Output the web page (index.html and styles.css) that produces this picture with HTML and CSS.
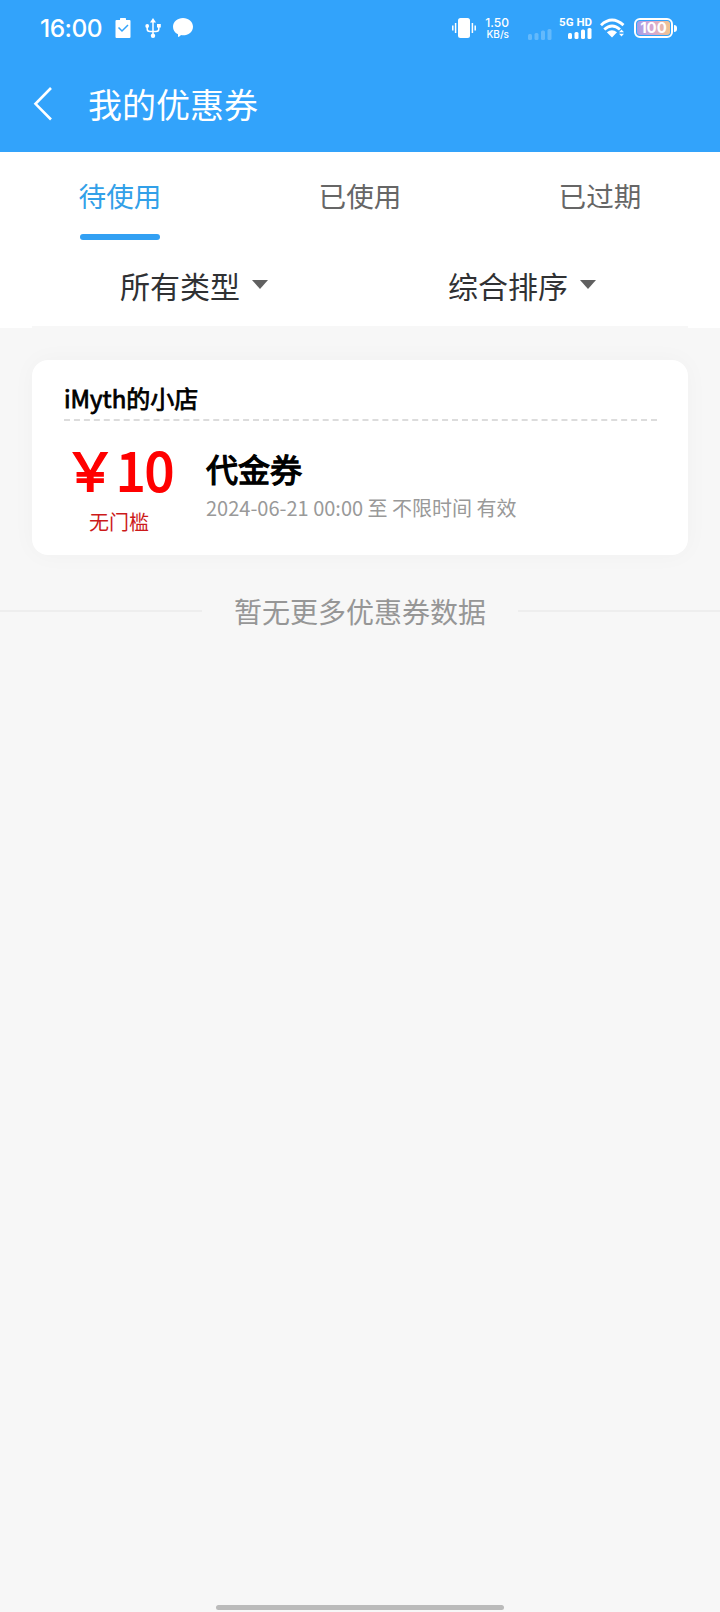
FILE: index.html
```
<!DOCTYPE html>
<html lang="zh-CN">
<head>
<meta charset="utf-8">
<title>我的优惠券</title>
<link rel="stylesheet" href="styles.css">
</head>
<body>
<header class="header">
  <div class="status">
    <div class="status-left">
      <span class="clock">16:00</span>
      <svg class="icon-task" width="16" height="20" viewBox="0 0 16 20"><path d="M1.500 2H5V.7Q5 0 5.700 0H10.300Q11 0 11 .7V2H14.500Q15.500 2 15.500 3V19Q15.500 20 14.500 20H1.500Q.5 20 .5 19V3Q.5 2 1.500 2Z" fill="#fff"/><path d="M3.500 9.500 7 13 13 7" fill="none" stroke="#32a3fb" stroke-width="1.500"/></svg>
      <svg class="icon-usb" width="16" height="20" viewBox="0 0 16 20" fill="none" stroke="#fff" stroke-width="1.500"><path d="M8 3V17M2.200 9V11Q2.200 13.500 5 13.500H11Q13.800 13.500 13.800 11V9"/><path d="M8 0 11 4.500H5Z" fill="#fff" stroke="none"/><circle cx="8" cy="17.700" r="2.200" fill="#fff" stroke="none"/><circle cx="2.200" cy="8" r="1.900" fill="#fff" stroke="none"/><path d="M12 6H15.800V9.500H12Z" fill="#fff" stroke="none"/></svg>
      <svg class="icon-chat" width="20" height="20" viewBox="0 0 20 20"><path d="M10 0C15.500 0 20 3.700 20 8.700S15.500 17.300 10 17.300Q8.900 17.300 8 17.100Q7 18.500 5 19V16.200Q0 13.800 0 8.700C0 3.700 4.500 0 10 0Z" fill="#fff"/></svg>
    </div>
    <div class="status-right">
      <svg class="icon-vibrate" width="24" height="20" viewBox="0 0 24 20"><rect x="6" width="12" height="20" rx="2.500" fill="#fff"/><path d="M.8 7.500V12.500M3.600 5V15M20.400 5V15M23.200 7.500V12.500" stroke="#fff" stroke-width="1.500"/></svg>
      <div class="speed"><span class="speed-value">1.50</span><span class="speed-unit">KB/s</span></div>
      <svg class="icon-nosim" width="24" height="12" viewBox="0 0 24 12" fill="#fff" opacity=".24"><rect y="6" width="4" height="6" rx="1.500"/><rect x="6.500" y="5" width="4" height="7" rx="1.500"/><rect x="13" y="2.500" width="4" height="9.500" rx="1.500"/><rect x="19.500" y="1" width="4" height="11" rx="1.500"/></svg>
      <div class="network">
        <span class="network-label">5G HD</span>
        <svg width="24" height="11" viewBox="0 0 24 11" fill="#fff"><rect y="5" width="4" height="6" rx="1.500"/><rect x="6.500" y="4" width="4" height="7" rx="1.500"/><rect x="13" y="1.500" width="4" height="9.500" rx="1.500"/><rect x="19.500" width="4" height="11" rx="1.500"/></svg>
      </div>
      <svg class="icon-wifi" width="26" height="20" viewBox="0 0 26 20" fill="none" stroke="#fff" stroke-width="2.900"><path d="M1 7.200Q12 -3 23.500 7.200M4.300 11.500Q12 4.500 20 11.500"/><path d="M6.800 14.300Q12 10 17 14.300L12 19.500Z" fill="#fff" stroke="none"/><path d="M19 14.200 21.500 11.500 24 14.200ZM19 15.800 21.500 18.500 24 15.800Z" fill="#fff" stroke="none"/></svg>
      <div class="battery"><span class="battery-level">100</span></div>
      <span class="battery-tip"></span>
    </div>
  </div>
  <div class="navbar">
    <svg width="20" height="34" viewBox="0 0 20 34"><path d="M18 1 2.500 16.800 18 32.500" fill="none" stroke="#fff" stroke-width="2.600"/></svg>
    <h1 class="title">我的优惠券</h1>
  </div>
</header>
<nav class="tabs">
  <div class="tab tab-active">待使用</div>
  <div class="tab">已使用</div>
  <div class="tab">已过期</div>
</nav>
<div class="filter-wrap">
  <div class="filters">
    <div class="filter">所有类型<span class="caret"></span></div>
    <div class="filter">综合排序<span class="caret"></span></div>
  </div>
</div>
<main class="list">
  <article class="card">
    <h2 class="shop">iMyth的小店</h2>
    <div class="coupon">
      <div class="price">
        <div class="amount">￥10</div>
        <div class="limit">无门槛</div>
      </div>
      <div class="info">
        <div class="name">代金券</div>
        <div class="date">2024-06-21 00:00 至 不限时间 有效</div>
      </div>
    </div>
  </article>
  <div class="end"><span class="rule"></span><span class="end-text">暂无更多优惠券数据</span><span class="rule"></span></div>
</main>
<footer class="home"><span class="home-bar"></span></footer>
</body>
</html>
```
FILE: styles.css
```
* { box-sizing: border-box; }
body {
  margin: 0;
  min-height: 1612px;
  display: flex;
  flex-direction: column;
  background: #f7f7f7;
  font-family: "Noto Sans CJK SC", sans-serif;
  font-weight: 400;
}
h1, h2 { margin: 0; font-weight: 400; }
svg { display: block; flex: none; }
.header { height: 152px; background: #32a3fb; color: #fff; }
.status { height: 56px; display: flex; justify-content: space-between; padding: 0 43px 0 40px; }
.status-left, .status-right { display: flex; align-items: center; }
.clock { font: 500 24.5px/30px Inter, sans-serif; width: 63px; letter-spacing: -.5px; white-space: nowrap; }
.icon-task { margin-left: 12px; }
.icon-usb { margin-left: 14px; }
.icon-chat { margin-left: 12px; }
.speed { display: flex; flex-direction: column; width: 25px; margin-left: 8px; font-family: Inter, sans-serif; font-weight: 500; white-space: nowrap; text-align: right; }
.speed-value { font-size: 12px; line-height: 12px; }
.speed-unit { font-size: 10px; line-height: 10px; }
.icon-nosim { margin: 11px 0 0 19px; }
.network { width: 32px; margin-left: 8px; display: flex; flex-direction: column; align-items: flex-end; }
.network-label { font: 700 11.5px/10px Roboto, sans-serif; margin-bottom: 1px; white-space: nowrap; }
.icon-wifi { margin-left: 8px; }
.battery { width: 39px; height: 20px; margin-left: 8px; padding: 1px; border: 2px solid #fff; border-radius: 6px; }
.battery-level { display: block; height: 14px; border-radius: 3px; background: linear-gradient(90deg, #a49de8, #d9a8cd 50%, #f2c58e); font: 700 15px/14px Inter, sans-serif; text-align: center; }
.battery-tip { width: 3px; height: 7px; margin-left: 1px; border-radius: 0 3px 3px 0; background: #fff; }
.navbar { height: 96px; display: flex; align-items: center; padding-left: 33px; }
.title { margin-left: 35px; font-size: 34px; line-height: 48px; }
.tabs { display: flex; height: 96px; background: #fff; }
.tab { flex: 1; display: flex; flex-direction: column; align-items: center; padding-top: 23px; font-size: 27.6px; line-height: 40px; color: #666; }
.tab-active { color: #32a0e8; }
.tab-active::after { content: ""; width: 80px; height: 6px; margin-top: 19px; border-radius: 3px; background: #32a0f3; }
.filter-wrap { height: 80px; padding: 0 32px; background: #fff; }
.filters { height: 80px; display: flex; border-bottom: 2px solid #f7f7f7; }
.filter { flex: 1; display: flex; align-items: center; justify-content: center; padding: 0 4px 5px 0; font-size: 30px; line-height: 44px; color: #303133; }
.caret { margin: 0 0 1px 12px; border: 8px solid transparent; border-top: 9px solid #606060; border-bottom: 0; }
.list { flex: 1; padding-top: 32px; }
.card { height: 195px; margin: 0 32px; padding: 20px 31px 0 32px; border-radius: 16px; background: #fff; box-shadow: 0 0 24px rgba(0, 0, 0, .03); }
.shop { height: 41px; font-size: 24px; line-height: 36px; color: #000; -webkit-text-stroke: .8px #000; border-bottom: 2px dashed #dcdcdc; }
.coupon { display: flex; }
.price { width: 110px; padding-top: 15px; display: flex; flex-direction: column; align-items: center; }
.amount { font-size: 52px; line-height: 66px; color: #f00; -webkit-text-stroke: 2px #f00; white-space: nowrap; }
.limit { margin-top: 3px; font-size: 20px; line-height: 34px; color: #cc1a1a; }
.info { margin-left: 32px; padding-top: 25px; }
.name { margin-bottom: 2px; font-size: 32px; line-height: 44px; color: #000; -webkit-text-stroke: 1.3px #000; }
.date { font-size: 20px; line-height: 32px; color: #999; }
.end { margin-top: 36px; display: flex; align-items: center; justify-content: space-between; }
.rule { width: 202px; height: 2px; background: #eee; }
.end-text { font-size: 28px; line-height: 40px; color: #969696; }
.home { height: 7px; display: flex; justify-content: center; align-items: flex-start; }
.home-bar { width: 288px; height: 5px; border-radius: 3px; background: #bbb; }
```
